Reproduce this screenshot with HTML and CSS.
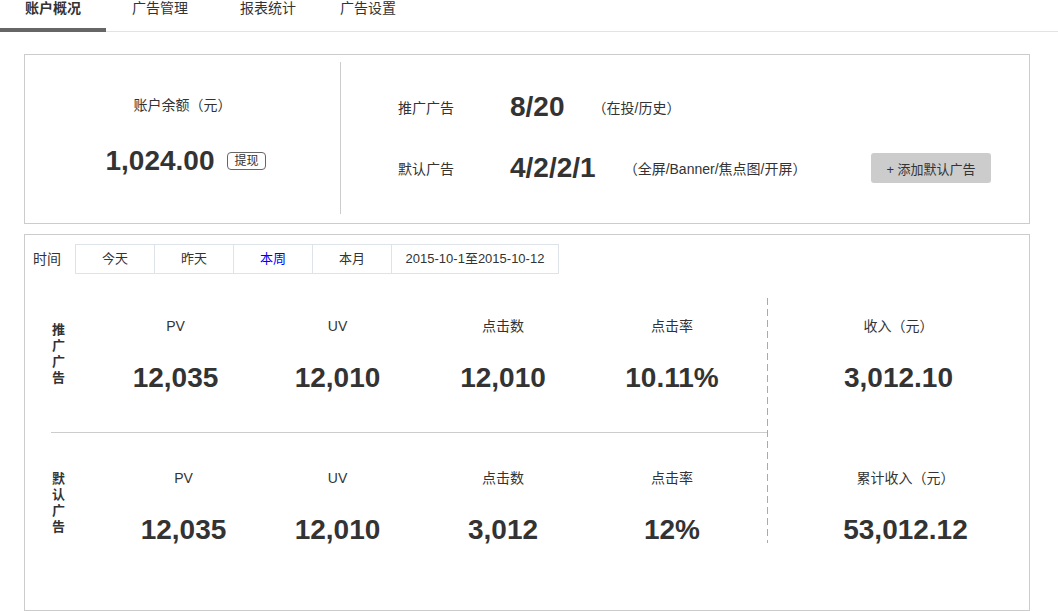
FILE: index.html
```html
<!DOCTYPE html>
<html lang="zh-CN">
<head>
<meta charset="utf-8">
<title>账户概况</title>
<link rel="stylesheet" href="styles.css">
</head>
<body>
<div class="tabs">
  <div class="tab active">账户概况</div>
  <div class="tab">广告管理</div>
  <div class="tab">报表统计</div>
  <div class="tab last">广告设置</div>
</div>

<div class="panel summary">
  <div class="balance">
    <div class="balance-label">账户余额（元）</div>
    <div class="balance-value">
      <span class="big">1,024.00</span>
      <span class="btn-withdraw">提现</span>
    </div>
  </div>
  <div class="ads">
    <div class="ad-row">
      <span class="ad-label">推广广告</span>
      <span class="ad-value">8/20</span>
      <span class="ad-note">（在投/历史）</span>
    </div>
    <div class="ad-row">
      <span class="ad-label">默认广告</span>
      <span class="ad-value">4/2/2/1</span>
      <span class="ad-note">（全屏/Banner/焦点图/开屏）</span>
      <button class="btn-add">+ 添加默认广告</button>
    </div>
  </div>
</div>

<div class="panel report">
  <div class="filter">
    <span class="filter-label">时间</span>
    <div class="filter-tabs">
      <span class="ft">今天</span>
      <span class="ft">昨天</span>
      <span class="ft current">本周</span>
      <span class="ft">本月</span>
      <span class="ft date">2015-10-1至2015-10-12</span>
    </div>
  </div>

  <div class="stats">
    <div class="stats-main">
      <div class="stat-row first">
        <div class="row-label">推广广告</div>
        <div class="stat"><div class="stat-name">PV</div><div class="stat-num">12,035</div></div>
        <div class="stat"><div class="stat-name">UV</div><div class="stat-num">12,010</div></div>
        <div class="stat"><div class="stat-name">点击数</div><div class="stat-num">12,010</div></div>
        <div class="stat"><div class="stat-name">点击率</div><div class="stat-num">10.11%</div></div>
      </div>
      <div class="stat-row second">
        <div class="row-label">默认广告</div>
        <div class="stat pv2"><div class="stat-name">PV</div><div class="stat-num">12,035</div></div>
        <div class="stat"><div class="stat-name">UV</div><div class="stat-num">12,010</div></div>
        <div class="stat"><div class="stat-name">点击数</div><div class="stat-num">3,012</div></div>
        <div class="stat"><div class="stat-name">点击率</div><div class="stat-num">12%</div></div>
      </div>
    </div>
    <div class="vdash"></div>
    <div class="stats-side">
      <div class="stat side first"><div class="stat-name">收入（元）</div><div class="stat-num">3,012.10</div></div>
      <div class="stat side second"><div class="stat-name">累计收入（元）</div><div class="stat-num">53,012.12</div></div>
    </div>
  </div>
</div>
</body>
</html>
```

FILE: styles.css
```css
body {
  margin: 0;
  background: #fff;
  color: #333;
  font-family: "Liberation Sans", "Noto Sans CJK SC", sans-serif;
  font-size: 14px;
  text-spacing-trim: space-all;
  font-feature-settings: "chws" 0, "halt" 0, "palt" 0;
}

/* top tabs */
.tabs {
  display: flex;
  height: 32px;
  box-sizing: border-box;
  border-bottom: 1px solid #e3e3e3;
}
.tab {
  padding: 0 26px;
  line-height: 16px;
  height: 31px;
  box-sizing: border-box;
}
.tab.last {
  padding-left: 18px;
}
.tab.active {
  padding: 0 25px;
  font-weight: bold;
  height: 32px;
  margin-bottom: -1px;
  border-bottom: 4px solid #666;
}

/* panels */
.panel {
  margin-left: 24px;
  width: 1006px;
  box-sizing: border-box;
  border: 1px solid #ccc;
}

.summary {
  margin-top: 22px;
  display: flex;
  padding: 7px 0 9px;
}
.balance {
  width: 315px;
  height: 152px;
  border-right: 1px solid #ccc;
}
.balance-label {
  padding-top: 33px;
  line-height: 20px;
  text-align: center;
}
.balance-value {
  margin-top: 31px;
  height: 30px;
  display: flex;
  align-items: center;
  justify-content: center;
  gap: 13px;
  padding-left: 6px;
}
.big {
  font-size: 28px;
  font-weight: bold;
  line-height: 30px;
}
.btn-withdraw {
  font-size: 12px;
  line-height: 16px;
  padding: 0 6px;
  border: 1px solid #666;
  border-radius: 4px;
}

.ads {
  flex: 1;
  padding: 0 38px 0 57px;
}
.ad-row {
  display: flex;
  align-items: center;
  height: 30px;
  margin-top: 31px;
}
.ad-row:first-child {
  margin-top: 30px;
}
.ad-label {
  width: 112px;
}
.ad-value {
  font-size: 28px;
  font-weight: bold;
  margin-right: 28px;
}
.ad-note {
  font-size: 14px;
}
.btn-add {
  margin-left: auto;
  width: 120px;
  height: 30px;
  border: 0;
  border-radius: 3px;
  background: #ccc;
  color: #333;
  font-family: "Liberation Sans", "Noto Sans CJK SC", sans-serif;
  font-size: 13px;
  padding: 0;
}

/* report */
.report {
  margin-top: 10px;
  padding: 9px 0 67px;
}
.filter {
  display: flex;
  align-items: center;
  padding-left: 8px;
}
.filter-label {
  margin-right: 14px;
  line-height: 20px;
}
.filter-tabs {
  display: flex;
  border: 1px solid #dde3e9;
  font-size: 13px;
}
.ft {
  width: 78px;
  line-height: 28px;
  text-align: center;
}
.ft + .ft {
  border-left: 1px solid #dde3e9;
}
.ft.date {
  width: 166px;
}
.ft.current {
  color: #00f;
}

.stats {
  display: flex;
  margin: 24px 0 0 26px;
}
.stats-main {
  width: 716px;
}
.stat-row {
  display: grid;
  grid-template-columns: 44px 161px 163px 168px 170px;
  box-sizing: border-box;
}
.stat-row.first {
  height: 135px;
  border-bottom: 1px solid #ccc;
}
.stat-row.second {
  height: 110px;
}
.row-label {
  width: 13px;
  padding-left: 1px;
  font-size: 13px;
  font-weight: bold;
  line-height: 16px;
  word-break: break-all;
}
.first .row-label {
  padding-top: 24px;
}
.second .row-label {
  padding-top: 38px;
}
.stat {
  text-align: center;
}
.first .stat,
.stat.side.first {
  padding-top: 18px;
}
.second .stat,
.stat.side.second {
  padding-top: 35px;
}
.stat.pv2 {
  padding-left: 16px;
}
.stat-name {
  line-height: 20px;
}
.stat-num {
  margin-top: 27px;
  font-size: 28px;
  font-weight: bold;
  line-height: 30px;
}

.vdash {
  width: 1px;
  background: repeating-linear-gradient(to bottom, #aaa 0 7px, transparent 7px 11px);
}
.stats-side {
  flex: 1;
}
.stat.side {
  box-sizing: border-box;
}
.stat.side.first {
  height: 135px;
}
.stat.side.second {
  height: 110px;
  padding-left: 14px;
}
```
